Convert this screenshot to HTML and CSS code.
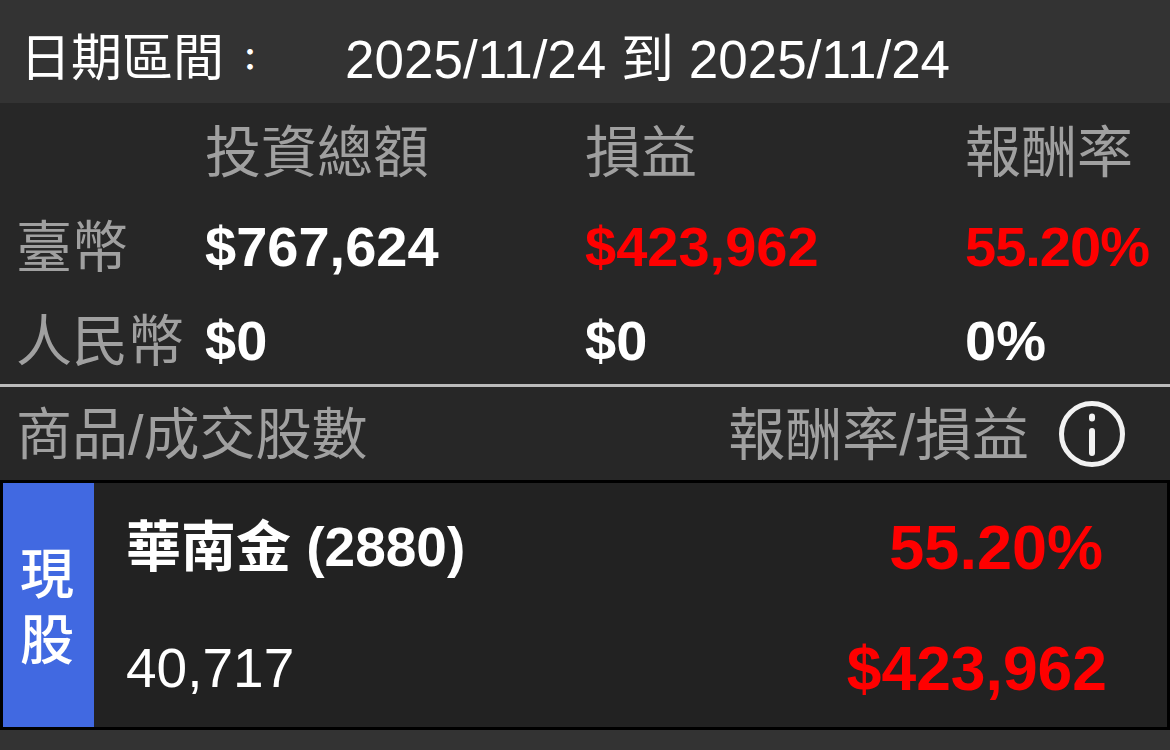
FILE: index.html
```html
<!DOCTYPE html>
<html lang="zh-Hant">
  <head>
    <meta charset="UTF-8" />
    <title>損益</title>
    <link rel="stylesheet" href="styles.css">
  </head>
  <body>
    <div class="date-bar">
      <span class="date-label">日期區間<span class="date-colon">：</span></span>
      <span class="date-range">2025/11/24 到 2025/11/24</span>
    </div>
    <div class="summary">
      <span></span>
      <span class="muted col-head">投資總額</span>
      <span class="muted col-head">損益</span>
      <span class="muted col-head">報酬率</span>

      <span class="muted">臺幣</span>
      <span class="value">$767,624</span>
      <span class="value up">$423,962</span>
      <span class="value up tight">55.20%</span>

      <span class="muted">人民幣</span>
      <span class="value">$0</span>
      <span class="value">$0</span>
      <span class="value">0%</span>
    </div>
    <div class="list-head">
      <span class="muted">商品/成交股數</span>
      <div class="list-head-right">
        <span class="muted wide">報酬率/損益</span>
        <svg class="info-icon" viewBox="0 0 66 66" aria-hidden="true">
          <circle cx="33" cy="33" r="30.5" fill="none" stroke="#f2f2f2" stroke-width="5" />
          <path d="M33 15.5v2M33 30v22" fill="none" stroke="#f2f2f2" stroke-width="6" stroke-linecap="round" />
        </svg>
      </div>
    </div>
    <div class="card">
      <div class="card-tag">現<br />股</div>
      <div class="card-body">
        <div class="card-row">
          <span class="card-name">華南金 (2880)</span>
          <span class="card-amount card-rate up">55.20%</span>
        </div>
        <div class="card-row">
          <span class="card-qty">40,717</span>
          <span class="card-amount up">$423,962</span>
        </div>
      </div>
    </div>
  </body>
</html>
```

FILE: styles.css
```css
*,
*::before,
*::after {
  box-sizing: border-box;
}

html,
body {
  height: 100%;
}

body {
  margin: 0;
  overflow: hidden;
  background-color: #333;
  color: #fff;
  font-family: "Liberation Sans", "Noto Sans CJK TC", sans-serif;
}

.muted {
  padding-bottom: 8px;
  color: #a0a0a0;
  font-size: 56px;
}

.col-head {
  margin-left: 2px;
  padding-bottom: 10px;
}

.wide {
  font-size: 57px;
}

.up {
  color: #ff0000;
}

.date-bar {
  display: flex;
  align-items: center;
  height: 103px;
  padding: 0 0 0 20px;
  font-size: 51px;
}

.date-label {
  flex: none;
  width: 325px;
  margin-top: 4px;
  white-space: nowrap;
}

.date-colon {
  margin-left: 11px;
  font-size: 30px;
  font-weight: bold;
  vertical-align: 6px;
}

.date-range {
  margin-top: 6px;
  font-size: 53px;
  white-space: nowrap;
}

.summary {
  display: grid;
  grid-template-columns: 187px 380px 380px 1fr;
  grid-auto-rows: 94px;
  align-items: center;
  height: 284px;
  padding: 2px 0 0 16px;
  background-color: #272727;
  border-bottom: 3px solid #bbb;
}

.value {
  margin-left: 2px;
  font-size: 56px;
  font-weight: bold;
}

.tight {
  letter-spacing: -1px;
}

.list-head {
  display: flex;
  justify-content: space-between;
  align-items: center;
  height: 93px;
  padding: 0 45px 0 16px;
  background-color: #272727;
}

.list-head-right {
  display: flex;
  align-items: center;
  gap: 30px;
}

.info-icon {
  width: 66px;
  height: 66px;
}

.card {
  display: flex;
  height: 250px;
  background-color: #222;
  border: 3px solid #000;
}

.card-tag {
  display: flex;
  align-items: center;
  justify-content: center;
  width: 91px;
  padding: 6px 3px 0 0;
  background-color: #4169e1;
  font-size: 54px;
  font-weight: 500;
  line-height: 66px;
  text-align: center;
}

.card-body {
  flex: 1;
  display: flex;
  flex-direction: column;
  justify-content: space-between;
  padding: 14px 60px 14px 32px;
}

.card-row {
  display: flex;
  justify-content: space-between;
  align-items: center;
  height: 90px;
}

.card-name {
  font-size: 55px;
  font-weight: bold;
}

.card-qty {
  font-size: 55px;
}

.card-amount {
  font-size: 62.4px;
  font-weight: bold;
}

.card-rate {
  margin: 10px 4px 0 0;
  font-size: 63px;
}
```
